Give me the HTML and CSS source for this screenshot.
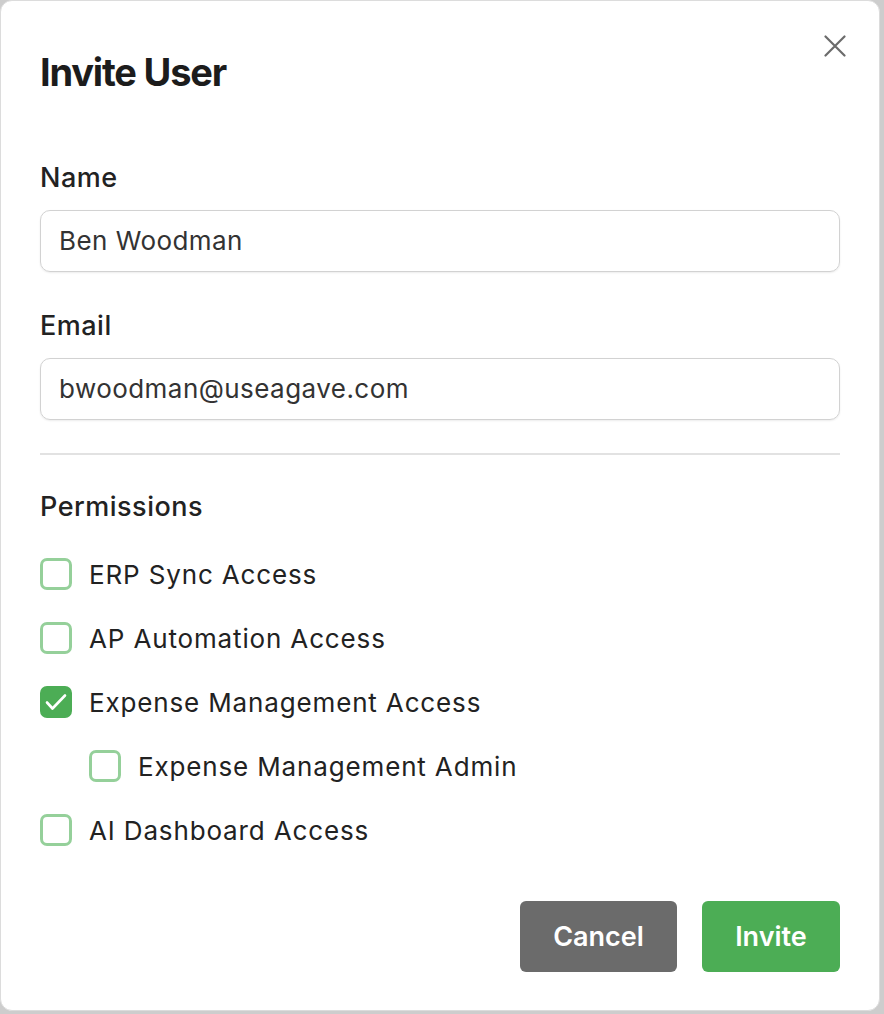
FILE: index.html
```html
<!DOCTYPE html>
<html lang="en">
<head>
    <meta charset="UTF-8">
    <title>Invite User</title>
    <link rel="stylesheet" href="styles.css">
</head>
<body>
<div class="modal">
    <button class="close" type="button">
        <svg width="22" height="22" viewBox="0 0 22 22"><path d="M1.5 1.5L20.5 20.5M20.5 1.5L1.5 20.5" stroke="#6b6b6b" stroke-width="2.2" stroke-linecap="round"/></svg>
    </button>
    <h2 class="title">Invite User</h2>

    <div class="field">
        <label class="label">Name</label>
        <div class="input">Ben Woodman</div>
    </div>
    <div class="field">
        <label class="label">Email</label>
        <div class="input">bwoodman@useagave.com</div>
    </div>

    <hr class="line">

    <div class="label">Permissions</div>
    <ul class="perms">
        <li><span class="box"></span>ERP Sync Access</li>
        <li><span class="box"></span>AP Automation Access</li>
        <li><span class="box on"><svg width="32" height="32" viewBox="0 0 32 32"><path d="M7 16.5L12.5 22.5L25 9.5" fill="none" stroke="#fff" stroke-width="2.6" stroke-linecap="round" stroke-linejoin="round"/></svg></span>Expense Management Access</li>
        <li class="sub"><span class="box"></span>Expense Management Admin</li>
        <li><span class="box"></span>AI Dashboard Access</li>
    </ul>

    <div class="actions">
        <button class="btn cancel" type="button">Cancel</button>
        <button class="btn invite" type="button">Invite</button>
    </div>
</div>
</body>
</html>
```

FILE: styles.css
```css
*{ margin: 0; padding: 0; box-sizing: border-box;}
body{ background: #cdcdcd; font-family: Inter, "Noto Sans", sans-serif; color: #222;}

.modal{ position: relative; width: 880px; height: 1011px; background: #fff; border-radius: 12px;
    border: 1px solid #dcdcdc; padding: 48px 39px 0 39px;}
.close{ position: absolute; right: 33px; top: 34px; border: 0; background: none; cursor: pointer; display: flex;}

.title{ font-size: 38px; line-height: 46px; font-weight: 700; letter-spacing: -1.2px; color: #1c1c1c; margin-bottom: 67px;}

.field{ margin-bottom: 38px;}
.label{ display: block; font-size: 27px; line-height: 32px; font-weight: 500; letter-spacing: 0.5px; color: #222; margin-bottom: 16px;}
.input{ height: 62px; border: 1.5px solid #d2d2d2; border-radius: 10px; padding: 0 18px;
    font-size: 26px; line-height: 59px; letter-spacing: 0.45px; color: #333; box-shadow: 0 1px 2px rgba(0,0,0,.08);}

.line{ border: 0; border-top: 2px solid #e2e2e2; margin: -5px 0 36px;}

.perms{ list-style: none; margin-top: 35px;}
.perms li{ display: flex; align-items: center; gap: 17px; height: 32px; margin-bottom: 32px;
    font-size: 26px; letter-spacing: 0.85px; color: #222;}
.perms li.sub{ padding-left: 49px;}
.box{ width: 32px; height: 32px; flex: none; border: 3px solid #95d09a; border-radius: 7px; display: flex;}
.box.on{ background: #4cad55; border-color: #4cad55;}
.box.on svg{ margin: -3px;}

/* margin collapses with the last row's bottom margin */
.actions{ display: flex; justify-content: flex-end; gap: 25px; margin-top: 55px;}
.btn{ height: 71px; border: 0; border-radius: 6px; color: #fff; font-family: inherit; font-size: 27px; font-weight: 600; padding: 0 33px;}
.cancel{ background: #6b6b6b; width: 157px;}
.invite{ background: #4cad55; width: 138px;}
```
